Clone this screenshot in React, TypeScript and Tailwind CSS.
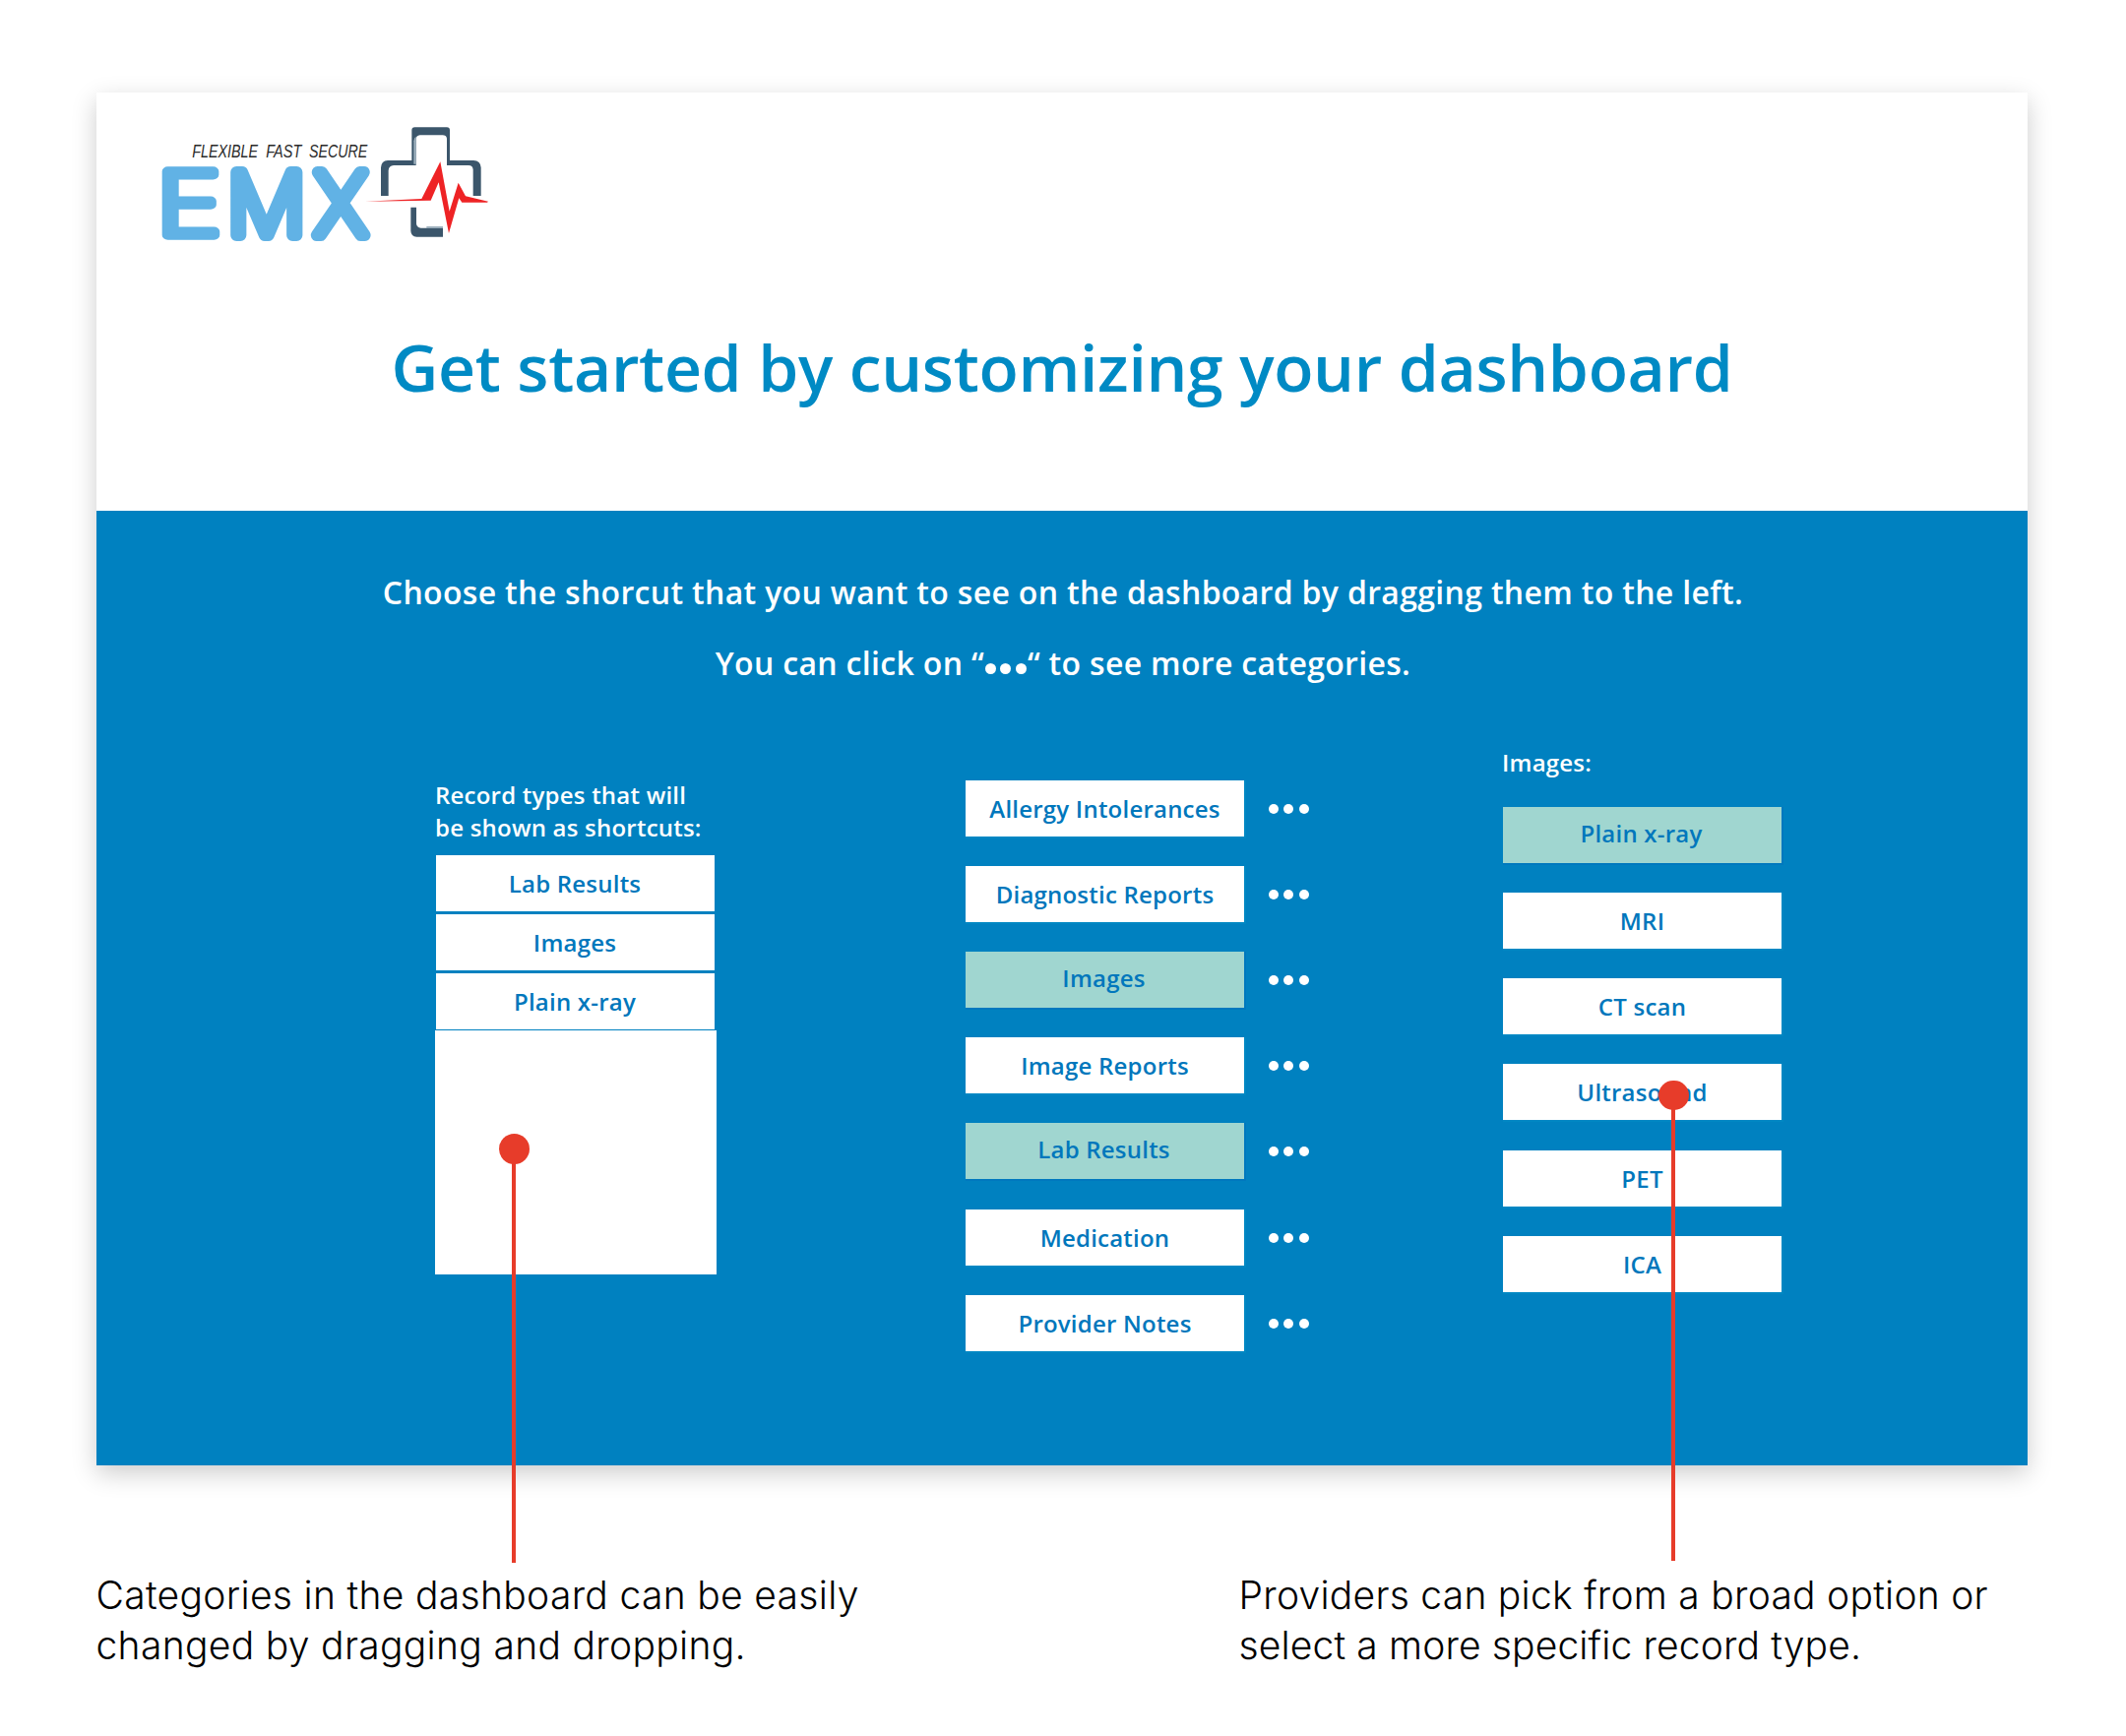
type RecordOption = { label: string; selected?: boolean };

const shortcuts = ['Lab Results', 'Images', 'Plain x-ray'];

const categories: RecordOption[] = [
  { label: 'Allergy Intolerances' },
  { label: 'Diagnostic Reports' },
  { label: 'Images', selected: true },
  { label: 'Image Reports' },
  { label: 'Lab Results', selected: true },
  { label: 'Medication' },
  { label: 'Provider Notes' },
];

const imageTypes: RecordOption[] = [
  { label: 'Plain x-ray', selected: true },
  { label: 'MRI' },
  { label: 'CT scan' },
  { label: 'Ultrasound' },
  { label: 'PET' },
  { label: 'ICA' },
];

function Logo() {
  return (
    <svg className="h-[120px] w-[340px]" viewBox="240 138 1020 360" role="img" aria-label="EMX">
      <g fontFamily="Liberation Sans, sans-serif" fontStyle="italic" fontWeight="400" fontSize="55" fill="#2b2b2b">
        <text x="346" y="239" textLength="200" lengthAdjust="spacingAndGlyphs">FLEXIBLE</text>
        <text x="571" y="239" textLength="108" lengthAdjust="spacingAndGlyphs">FAST</text>
        <text x="702" y="239" textLength="178" lengthAdjust="spacingAndGlyphs">SECURE</text>
      </g>
      {/* thin letters with a heavy round outline give the soft wordmark */}
      <g fontFamily="Inter, sans-serif" fontWeight="200" fill="#61b2e5" stroke="#61b2e5" strokeLinejoin="round">
        <text transform="translate(236.5 477) scale(1.263 1)" fontSize="268" strokeWidth="28">E</text>
        <text transform="translate(453 477) scale(1.015 1)" fontSize="262" strokeWidth="36">M</text>
        <text transform="translate(717 477) scale(0.962 1)" fontSize="265" strokeWidth="36">X</text>
      </g>
      {/* medical cross outline */}
      <g fill="#3b566b">
        <path d="M921 357V271Q922 250 942 249H1015V157Q1015 148 1024 148H1122Q1131 148 1131 157V249H1203Q1225 250 1226 271V357H1202V277Q1201 264 1188 264H1122V182Q1120 172 1109 172H1040Q1028 173 1028 186V264H960Q945 265 944 280V357Z" />
        <path d="M1012 392H1029V442Q1030 454 1043 455H1110V482H1030Q1013 481 1012 464Z" />
      </g>
      <g fill="#9db0bd">
        <path d="M1021 190Q1022 180 1028 176V260H1021Z" />
        <path d="M1060 450H1110V456H1060Z" />
      </g>
      {/* heartbeat line */}
      <path
        fill="#ee2325"
        d="M873 374L1045 366L1102 253L1130 404L1157 317L1179 358L1248 374L1245 377L1168 377L1159 364L1128 471L1097 316L1073 371Z"
      />
    </svg>
  );
}

function Option({ label, selected }: RecordOption) {
  return (
    <div
      className={
        selected
          ? 'flex h-[57px] w-[283px] items-center justify-center bg-[#a0d6d0] pr-[2px] pb-[5px] text-[#0077bc] shadow-[1px_1px_0_1px_#0078be]'
          : 'flex h-[57px] w-[283px] items-center justify-center bg-white text-[#0077bc] shadow-[1px_1px_0_1px_#0087c3]'
      }
    >
      {label}
    </div>
  );
}

function MoreDots() {
  return (
    <span className="flex gap-[5.3px] pt-px">
      <span className="size-[10px] rounded-full bg-white" />
      <span className="size-[10px] rounded-full bg-white" />
      <span className="size-[10px] rounded-full bg-white" />
    </span>
  );
}

export default function App() {
  return (
    <div className="relative h-[1764px] w-[2160px] overflow-hidden bg-white pt-[94px] font-['Open_Sans',sans-serif] font-semibold">
      <main className="ml-[98px] w-[1962px] shadow-[0_8px_24px_rgba(0,0,0,0.2)]">
        <header className="h-[425px] bg-white pt-[32px]">
          <div className="pl-[62px]">
            <Logo />
          </div>
          <h1 className="mt-[81px] text-center text-[66px] leading-[90px] tracking-[-0.32px] text-[#008ac4]">
            Get started by customizing your dashboard
          </h1>
        </header>

        <section className="h-[970px] bg-[#0081c0] pt-[47px] text-white">
          <div className="pl-[2px] text-center text-[32px] leading-[72px] tracking-[0.32px]">
            <p>Choose the shorcut that you want to see on the dashboard by dragging them to the left.</p>
            <p>
              You can click on “
              <span className="relative -top-px mx-px inline-flex gap-[4.5px]">
                <span className="size-[11px] rounded-full bg-white" />
                <span className="size-[11px] rounded-full bg-white" />
                <span className="size-[11px] rounded-full bg-white" />
              </span>
              “ to see more categories.
            </p>
          </div>

          <div className="flex pl-[345px] text-[24px] leading-[33px] tracking-[0.22px]">
            <div className="w-[285px] pt-[81px]">
              <h2 className="-ml-px whitespace-nowrap">
                Record types that will
                <br />
                be shown as shortcuts:
              </h2>
              <ul className="mt-[12px] flex flex-col gap-[3px]">
                {shortcuts.map((label) => (
                  <li
                    key={label}
                    className="flex h-[57px] w-[283px] items-center justify-center bg-white pr-px text-[#0077bc]"
                  >
                    {label}
                  </li>
                ))}
              </ul>
              <div className="mt-px -ml-px h-[248px] bg-white" />
            </div>

            <ul className="ml-[253px] flex w-[349px] flex-col gap-[30.12px] pt-[83px]">
              {categories.map((c) => (
                <li key={c.label} className="flex items-center gap-[25px]">
                  <Option {...c} />
                  <MoreDots />
                </li>
              ))}
            </ul>

            <div className="ml-[197px] pt-[48px]">
              <h2 className="-ml-px">Images:</h2>
              <div className="mt-[29px] flex flex-col gap-[30.16px]">
                {imageTypes.map((t) => (
                  <Option key={t.label} {...t} />
                ))}
              </div>
            </div>
          </div>
        </section>
      </main>

      <div className="mt-[107px] flex pl-[97.5px] font-['Inter',sans-serif] text-[39px] leading-[50.5px] font-light text-black">
        <p className="w-[1161px] tracking-[0.32px]">
          Categories in the dashboard can be easily
          <br />
          changed by dragging and dropping.
        </p>
        <p className="tracking-[0.26px]">
          Providers can pick from a broad option or
          <br />
          <span className="tracking-[0.14px]">select a more specific record type.</span>
        </p>
      </div>

      {/* callout pins laid over the card */}
      <div className="absolute top-[1152px] left-[506.5px] flex h-[436px] w-[31px] flex-col items-center">
        <span className="h-[30.5px] w-[31px] shrink-0 rounded-full bg-[#e73c2a]" />
        <span className="-mt-1 w-[4px] grow bg-[#e73c2a]" />
      </div>
      <div className="absolute top-[1097.5px] left-[1684.5px] flex h-[488px] w-[31px] flex-col items-center">
        <span className="h-[30.5px] w-[31px] shrink-0 rounded-full bg-[#e73c2a]" />
        <span className="-mt-1 w-[4px] grow bg-[#e73c2a]" />
      </div>
    </div>
  );
}
